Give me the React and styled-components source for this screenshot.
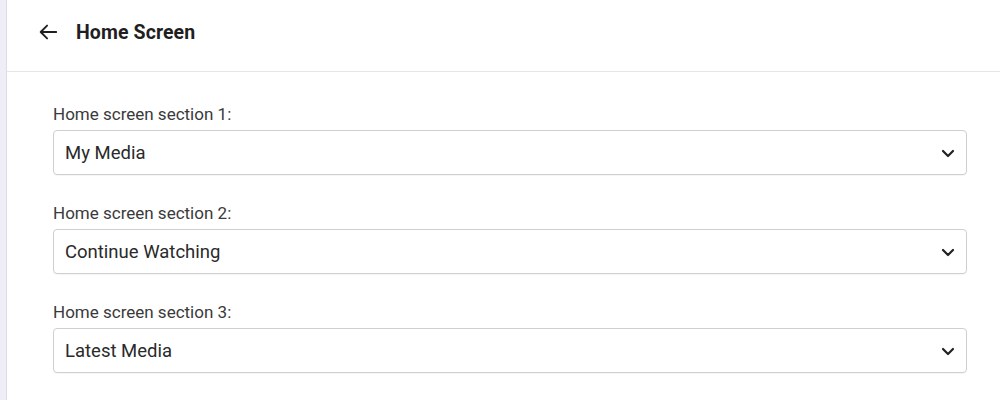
import React from 'react';
import styled, { createGlobalStyle } from 'styled-components';

const GlobalStyle = createGlobalStyle`
  body {
    margin: 0;
    background: #ffffff;
    font-family: Roboto, "Liberation Sans", sans-serif;
  }
`

const Shell = styled.div`
  display: flex;
  width: 1000px;
  height: 400px;
  overflow: hidden;
`

const SideStrip = styled.div`
  width: 6px;
  background: #efeef6;
  border-right: 1px solid #dddde3;
  flex-shrink: 0;
`

const Main = styled.div`
  flex: 1;
  display: flex;
  flex-direction: column;
`

const Header = styled.header`
  height: 72px;
  box-sizing: border-box;
  display: flex;
  align-items: center;
  padding: 0 0 7px 29px;
  gap: 16px;
  border-bottom: 1px solid #e6e6e6;
`

const BackButton = styled.button`
  border: none;
  background: none;
  padding: 0;
  width: 24px;
  height: 24px;
  display: flex;
  align-items: center;
  justify-content: center;
  color: #1f1f1f;
  cursor: pointer;
`

const Title = styled.h1`
  margin: 0;
  font-size: 19.5px;
  font-weight: 700;
  color: #1f1f1f;
  letter-spacing: 0.1px;
`

const Form = styled.div`
  display: flex;
  flex-direction: column;
  gap: 28px;
  padding: 32px 33px 0 46px;
`

const Field = styled.div`
  display: flex;
  flex-direction: column;
  gap: 6px;
`

const Label = styled.label`
  font-size: 17px;
  color: #3a3a3a;
  line-height: 20px;
`

const SelectBox = styled.div`
  height: 45px;
  box-sizing: border-box;
  border: 1px solid #cfcfcf;
  border-radius: 4px;
  display: flex;
  align-items: center;
  justify-content: space-between;
  padding: 0 10px 0 11px;
  font-size: 18.5px;
  color: #2a2a2a;
  box-shadow: 0 1px 1px rgba(0, 0, 0, 0.04);
`

const Chevron = () => (
  <svg width="16" height="16" viewBox="0 0 16 16" fill="none">
    <path d="M3 6l5 5 5-5" stroke="#222" strokeWidth="2.2" strokeLinecap="round" strokeLinejoin="round" />
  </svg>
)

const sections = ['My Media', 'Continue Watching', 'Latest Media'];

const App = () => {
  return (
    <>
      <GlobalStyle />
      <Shell>
        <SideStrip />
        <Main>
          <Header>
            <BackButton>
              <svg width="22" height="22" viewBox="0 0 24 24" fill="none">
                <path d="M21 12H4M11 5l-7 7 7 7" stroke="#1f1f1f" strokeWidth="2" strokeLinecap="round" strokeLinejoin="round" />
              </svg>
            </BackButton>
            <Title>Home Screen</Title>
          </Header>
          <Form>
            {sections.map((value, i) => (
              <Field key={value}>
                <Label>Home screen section {i + 1}:</Label>
                <SelectBox>
                  <span>{value}</span>
                  <Chevron />
                </SelectBox>
              </Field>
            ))}
          </Form>
        </Main>
      </Shell>
    </>
  );
};

export default App;
